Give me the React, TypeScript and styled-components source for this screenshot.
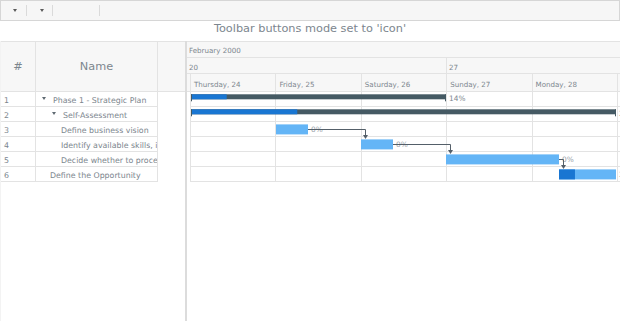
import React from 'react';
import styled, { createGlobalStyle } from 'styled-components';

const TEXT = '#7c868e';
const LINE = '#e3e3e3';
const HEAD_BG = '#f7f7f7';

const Global = createGlobalStyle`
  html, body { margin: 0; padding: 0; background: #fff; }
  body { font-family: "DejaVu Sans", "Liberation Sans", sans-serif; }
`;

const Page = styled.div`
  width: 620px;
  height: 321px;
  overflow: hidden;
  display: flex;
  flex-direction: column;
  font-family: "DejaVu Sans", "Liberation Sans", sans-serif;
`;

const Toolbar = styled.div`
  height: 21px;
  box-sizing: border-box;
  border: 1px solid #d6d6d6;
  background: #f6f6f6;
  display: flex;
  align-items: center;
`;

const ToolButton = styled.div<{ $w: number; $pad: number }>`
  width: ${(p) => p.$w}px;
  height: 100%;
  box-sizing: border-box;
  padding-left: ${(p) => p.$pad}px;
  display: flex;
  align-items: center;
`;

const Caret = styled.span`
  width: 0;
  height: 0;
  border-left: 2.5px solid transparent;
  border-right: 2.5px solid transparent;
  border-top: 3px solid #5a5a5a;
`;

const ToolSep = styled.span`
  width: 1px;
  height: 11px;
  background: #dadada;
`;

const Title = styled.div`
  height: 20px;
  box-sizing: border-box;
  padding-top: 2px;
  line-height: 12px;
  text-align: center;
  font-size: 11.3px;
  color: ${TEXT};
`;

const Chart = styled.div`
  flex: 1;
  display: flex;
  min-height: 0;
`;

const DataGrid = styled.div`
  width: 185px;
  display: flex;
  flex-direction: column;
  box-sizing: border-box;
  border-left: 1px solid #f3f3f3;
`;

const GridHeader = styled.div`
  height: 51px;
  box-sizing: border-box;
  border-top: 1px solid ${LINE};
  border-bottom: 1px solid ${LINE};
  background: ${HEAD_BG};
  display: grid;
  grid-template-columns: 35px 122px 1fr;
`;

const HeadCell = styled.div<{ $border?: boolean }>`
  display: flex;
  align-items: center;
  justify-content: center;
  font-size: 11.3px;
  color: ${TEXT};
  border-right: ${(p) => (p.$border ? `1px solid ${LINE}` : 'none')};
`;

const GridRow = styled.div`
  height: 15px;
  display: grid;
  grid-template-columns: 35px 122px 1fr;
`;

const Cell = styled.div<{ $pad: number }>`
  box-sizing: border-box;
  height: 15px;
  border-right: 1px solid ${LINE};
  border-bottom: 1px solid ${LINE};
  padding-left: ${(p) => p.$pad}px;
  padding-top: 2px;
  display: flex;
  align-items: center;
  font-size: 7.85px;
  color: ${TEXT};
  white-space: nowrap;
  overflow: hidden;
`;

const Toggle = styled.span`
  width: 0;
  height: 0;
  border-left: 2px solid transparent;
  border-right: 2px solid transparent;
  border-top: 3px solid #5f6a72;
  margin-right: 7px;
  margin-top: -3px;
  flex: none;
`;

const Splitter = styled.div`
  width: 2px;
  background: #dcdcdc;
`;

const Timeline = styled.div`
  flex: 1;
  display: flex;
  flex-direction: column;
  min-width: 0;
  overflow: hidden;
`;

const TimeHeader = styled.div`
  height: 51px;
  box-sizing: border-box;
  border-top: 1px solid ${LINE};
  background: ${HEAD_BG};
  display: flex;
  flex-direction: column;
`;

const HeadRow = styled.div<{ $h: number; $indent?: number }>`
  height: ${(p) => p.$h}px;
  box-sizing: border-box;
  border-bottom: 1px solid ${LINE};
  display: flex;
  padding-left: ${(p) => p.$indent ?? 0}px;
  white-space: nowrap;
`;

const HeadLabel = styled.div<{ $w?: number; $border?: boolean; $pad: number }>`
  ${(p) => (p.$w ? `width: ${p.$w}px; flex: none;` : 'flex: 1;')}
  box-sizing: border-box;
  padding-left: ${(p) => p.$pad}px;
  padding-top: 3px;
  border-left: ${(p) => (p.$border ? `1px solid ${LINE}` : 'none')};
  display: flex;
  align-items: center;
  font-size: 7.1px;
  color: ${TEXT};
  overflow: hidden;
`;

const rows = [
  { id: 1, name: 'Phase 1 - Strategic Plan', pad: 6, toggle: true },
  { id: 2, name: 'Self-Assessment', pad: 16, toggle: true },
  { id: 3, name: 'Define business vision', pad: 25 },
  { id: 4, name: 'Identify available skills, information and support', pad: 25 },
  { id: 5, name: 'Decide whether to proceed', pad: 25 },
  { id: 6, name: 'Define the Opportunity', pad: 14 },
];

const days = ['Thursday, 24', 'Friday, 25', 'Saturday, 26', 'Sunday, 27', 'Monday, 28', 'Tuesday, 29'];

const DAY = 85.4;
const X0 = 3;
const ROW = 15;
const W = 433;

const BAR = '#64b5f6';
const PROG = '#1976d2';
const SUM = '#455a64';
const CONN = '#545f69';

type Bar = { row: number; x1: number; x2: number; prog: number; summary?: boolean; label: string };

const bars: Bar[] = [
  { row: 0, x1: 4, x2: 259, prog: 0.14, summary: true, label: '14%' },
  { row: 1, x1: 4, x2: 429, prog: 0.25, summary: true, label: '25%' },
  { row: 2, x1: 89, x2: 121, prog: 0, label: '0%' },
  { row: 3, x1: 174, x2: 206, prog: 0, label: '0%' },
  { row: 4, x1: 259, x2: 372, prog: 0, label: '0%' },
  { row: 5, x1: 372, x2: 429, prog: 0.28, label: '28%' },
];

const links = [
  { x1: 121, x2: 178, y: 37.5, y2: 47 },
  { x1: 206, x2: 263, y: 52.5, y2: 62 },
  { x1: 372, x2: 376, y: 67.5, y2: 77 },
];

function GanttBody() {
  return (
    <svg width={W} height={92} style={{ display: 'block' }}>
      {Array.from({ length: 6 }, (_, k) => (
        <line key={'r' + k} x1={X0} x2={W} y1={ROW * (k + 1) - 0.5} y2={ROW * (k + 1) - 0.5} stroke={LINE} />
      ))}
      {Array.from({ length: 6 }, (_, k) => {
        const x = Math.round(X0 + DAY * k) + 0.5;
        return <line key={'c' + k} x1={x} x2={x} y1={0} y2={ROW * 6} stroke={LINE} />;
      })}
      {bars.map((b) => {
        const top = b.row * ROW;
        const w = b.x2 - b.x1;
        if (b.summary) {
          return (
            <g key={b.row}>
              <rect x={b.x1} y={top + 2.3} width={w} height={5} fill={SUM} />
              <rect x={b.x1} y={top + 2.3} width={w * b.prog} height={5} fill={PROG} />
              <rect x={b.x1} y={top + 2.3} width={1} height={7} fill={SUM} />
              <rect x={b.x2 - 1} y={top + 2.3} width={1} height={7} fill={SUM} />
              <text x={b.x2 + 3} y={top + 6} fontSize={7.4} fill={TEXT} dominantBaseline="central" fontFamily="DejaVu Sans">
                {b.label}
              </text>
            </g>
          );
        }
        return (
          <g key={b.row}>
            <rect x={b.x1} y={top + 2.4} width={w} height={10} fill={BAR} />
            {b.prog > 0 && <rect x={b.x1} y={top + 2.4} width={w * b.prog} height={10} fill={PROG} />}
            <text x={b.x2 + 3} y={top + 7.6} fontSize={7.4} fill="#9aa3a9" dominantBaseline="central" fontFamily="DejaVu Sans">
              {b.label}
            </text>
          </g>
        );
      })}
      {links.map((l, i) => (
        <g key={'l' + i}>
          <polyline
            points={`${l.x1},${l.y} ${l.x2 + 0.5},${l.y} ${l.x2 + 0.5},${l.y2 - 3}`}
            fill="none"
            stroke={CONN}
            strokeWidth={1}
          />
          <polygon points={`${l.x2 - 2},${l.y2 - 4} ${l.x2 + 3},${l.y2 - 4} ${l.x2 + 0.5},${l.y2}`} fill={CONN} />
        </g>
      ))}
    </svg>
  );
}

export default function App() {
  return (
    <Page>
      <Global />
      <Toolbar>
        <ToolButton $w={25} $pad={12}>
          <Caret />
        </ToolButton>
        <ToolSep />
        <ToolButton $w={25} $pad={13}>
          <Caret />
        </ToolButton>
        <ToolSep />
        <ToolButton $w={46} $pad={0} />
        <ToolSep />
      </Toolbar>
      <Title>Toolbar buttons mode set to 'icon'</Title>
      <Chart>
        <DataGrid>
          <GridHeader>
            <HeadCell $border>#</HeadCell>
            <HeadCell $border>Name</HeadCell>
            <HeadCell />
          </GridHeader>
          {rows.map((r) => (
            <GridRow key={r.id}>
              <Cell $pad={3}>{r.id}</Cell>
              <Cell $pad={r.pad}>
                {r.toggle && <Toggle />}
                {r.name}
              </Cell>
            </GridRow>
          ))}
        </DataGrid>
        <Splitter />
        <Timeline>
          <TimeHeader>
            <HeadRow $h={16}>
              <HeadLabel $pad={2}>February 2000</HeadLabel>
            </HeadRow>
            <HeadRow $h={17}>
              <HeadLabel $w={259} $pad={2}>20</HeadLabel>
              <HeadLabel $border $pad={2}>27</HeadLabel>
            </HeadRow>
            <HeadRow $h={18} $indent={3}>
              {days.map((d) => (
                <HeadLabel key={d} $w={DAY} $border $pad={3}>
                  {d}
                </HeadLabel>
              ))}
            </HeadRow>
          </TimeHeader>
          <GanttBody />
        </Timeline>
      </Chart>
    </Page>
  );
}
